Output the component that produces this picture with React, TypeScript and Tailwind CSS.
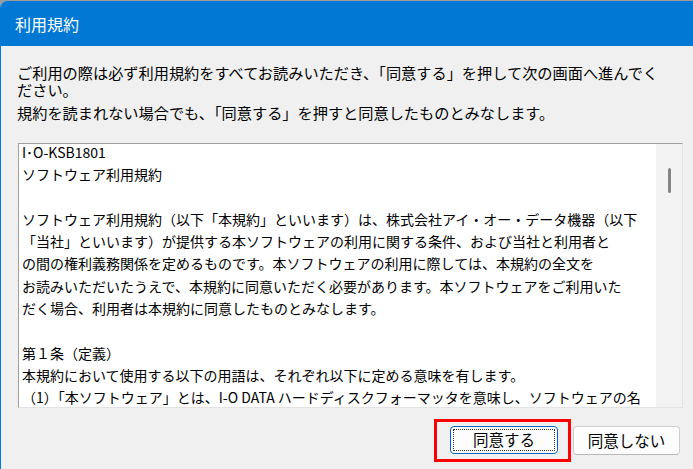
import React from "react";

const jp = { fontFamily: '"Noto Sans CJK JP", "Noto Sans", sans-serif' };

const termsLines = [
  "I･O-KSB1801",
  "ソフトウェア利用規約",
  "",
  "ソフトウェア利用規約（以下「本規約」といいます）は、株式会社アイ・オー・データ機器（以下",
  "「当社」といいます）が提供する本ソフトウェアの利用に関する条件、および当社と利用者と",
  "の間の権利義務関係を定めるものです。本ソフトウェアの利用に際しては、本規約の全文を",
  "お読みいただいたうえで、本規約に同意いただく必要があります。本ソフトウェアをご利用いた",
  "だく場合、利用者は本規約に同意したものとみなします。",
  "",
  "第１条（定義）",
  "本規約において使用する以下の用語は、それぞれ以下に定める意味を有します。",
  "（1）「本ソフトウェア」とは、I-O DATA ハードディスクフォーマッタを意味し、ソフトウェアの名",
];

export default function App() {
  return (
    <div className="w-[693px] h-[469px] bg-[#9c9c9c] pt-px overflow-hidden" style={jp}>
      <div className="h-full flex flex-col bg-[#f0f0f0] rounded-tl-[7px] overflow-hidden border-l border-[#0078d4]">
        {/* title bar */}
        <div className="h-[45px] shrink-0 bg-[#0078d4] flex items-center pl-[14px]">
          <span className="text-white text-[16px] leading-none">利用規約</span>
        </div>

        {/* message */}
        <div className="pl-[16px] pt-[18px] text-[15.2px] leading-[17px] text-black">
          <p className="whitespace-nowrap">
            ご利用の際は必ず利用規約をすべてお読みいただき、「同意する」を押して次の画面へ進んでく
            <br />
            ださい。
          </p>
          <p className="whitespace-nowrap mt-[6px]">
            規約を読まれない場合でも、「同意する」を押すと同意したものとみなします。
          </p>
        </div>

        {/* terms box */}
        <div className="ml-[17px] mt-[22px] w-[665px] h-[265px] shrink-0 flex bg-white border-t border-l border-[#a0a0a0] border-r border-b border-r-[#e3e3e3] border-b-[#e3e3e3]">
          <div className="flex-1 overflow-hidden pl-[3px] text-[14px] leading-[22.3px] text-black -mt-[3px]">
            {termsLines.map((line, i) => (
              <div key={i} className="whitespace-nowrap h-[22.3px]">
                {line}
              </div>
            ))}
          </div>
          <div className="w-[26px] shrink-0 bg-[#f3f3f3] flex justify-center pt-[24px]">
            <div className="w-[3px] h-[25px] rounded-full bg-[#858585]" />
          </div>
        </div>

        {/* buttons */}
        <div className="flex justify-end items-start mt-[11px] pr-[13px]">
          <div className="border-[3px] border-[#ff0000] pl-[13px] pr-[10px] pt-[4px] pb-[5px]">
            <button className="w-[108px] h-[28px] rounded-[4px] bg-[#fdfdfd] border border-[#0067c0] p-[2px] text-[15.5px] text-black">
              <span className="flex items-center justify-center w-full h-full border border-dotted border-[#333]">
                同意する
              </span>
            </button>
          </div>
          <button className="ml-[2px] mt-[7px] w-[107px] h-[29px] rounded-[4px] bg-[#fdfdfd] border border-[#d0d0d0] border-b-[#b8b8b8] text-[15.5px] text-black">
            同意しない
          </button>
        </div>
      </div>
    </div>
  );
}
